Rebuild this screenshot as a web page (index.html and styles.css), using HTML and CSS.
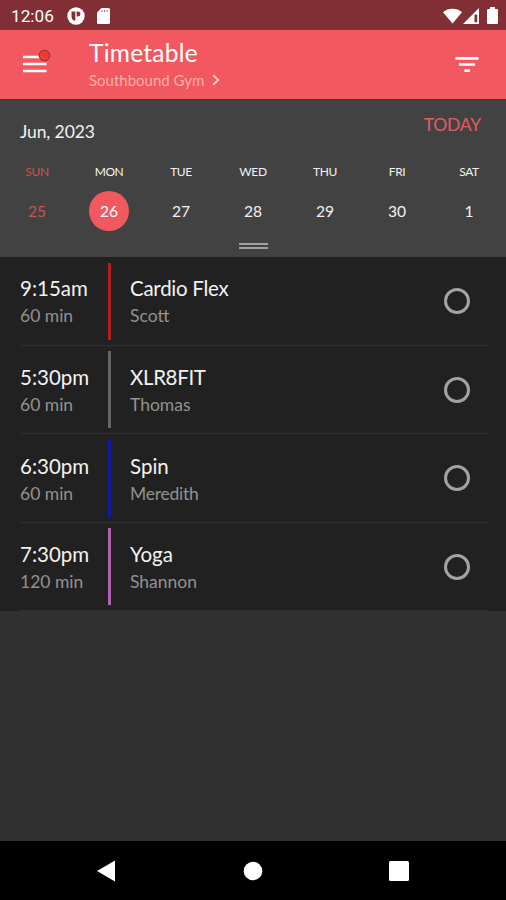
FILE: index.html
```html
<!DOCTYPE html>
<html lang="en">
<head>
<meta charset="utf-8">
<title>Timetable</title>
<link rel="stylesheet" href="styles.css">
</head>
<body>
<div class="status">
  <span class="clock">12:06</span>
  <svg class="app-dot" width="18" height="18" viewBox="0 0 18 18"><circle cx="9" cy="9" r="8.700" fill="#fff"/><path d="M4.500 4.500H8.300V13.500H6.500A5 5 0 0 1 4.500 9.500z" fill="#812f34"/><path d="M9.600 4.500h1.400a2.500 2.500 0 0 1 0 5H9.600z" fill="#812f34"/></svg>
  <svg class="sd" width="13" height="16" viewBox="0 0 13 16"><path d="M4.500 0H11.500a1.500 1.500 0 0 1 1.500 1.500V14.500a1.500 1.500 0 0 1-1.500 1.500H1.500A1.500 1.500 0 0 1 0 14.500V4.500z" fill="#fff"/><path d="M5 2v2M7.500 2v2M10 2v2" stroke="#a8686b" stroke-width="1"/></svg>
  <div class="system">
    <svg width="19" height="16" viewBox="0 0 20 16"><path d="M0 4C5.500-.8 14.500-.8 20 4L10 16z" fill="#fff"/></svg>
    <svg width="16" height="16" viewBox="0 0 16 16"><path d="M16 0v16H0z" fill="#fff"/><path d="M11.500 6.500h2.700v7.700h-2.700z" fill="#812f34"/></svg>
    <svg class="battery" width="11" height="17" viewBox="0 0 11 17"><path d="M3 0h5v2h2a1 1 0 0 1 1 1v13a1 1 0 0 1-1 1H1a1 1 0 0 1-1-1V3a1 1 0 0 1 1-1h2z" fill="#fff"/></svg>
  </div>
</div>
<header class="appbar">
  <svg class="menu" width="28" height="26" viewBox="0 0 28 26"><path d="M0 9h23.500M0 16h23.500M0 23h23.500" stroke="#fff" stroke-width="2.700"/><circle cx="21.500" cy="7.500" r="5.300" fill="#f63a2f" stroke="#7c3034" stroke-width="1"/></svg>
  <div class="heading">
    <h1>Timetable</h1>
    <div class="venue"><span>Southbound Gym</span><svg width="8" height="12" viewBox="0 0 8 12"><path d="M1.200 1.200 6.200 6l-5 4.800" fill="none" stroke="#ffc9c9" stroke-width="2"/></svg></div>
  </div>
  <svg class="filter" width="24" height="17" viewBox="0 0 24 17"><path d="M.5 2.300h23M4 8.500h16M9.500 14.700h5.500" stroke="#fff" stroke-width="2.700"/></svg>
</header>
<section class="calendar">
  <div class="cal-head"><span class="month">Jun, 2023</span><span class="today">TODAY</span></div>
  <div class="week">
    <div class="day sun"><span class="name">SUN</span><span class="date">25</span></div>
    <div class="day"><span class="name">MON</span><span class="date selected">26</span></div>
    <div class="day"><span class="name">TUE</span><span class="date">27</span></div>
    <div class="day"><span class="name">WED</span><span class="date">28</span></div>
    <div class="day"><span class="name">THU</span><span class="date">29</span></div>
    <div class="day"><span class="name">FRI</span><span class="date">30</span></div>
    <div class="day"><span class="name">SAT</span><span class="date">1</span></div>
  </div>
  <div class="handle"></div>
</section>
<main class="list">
  <div class="row"><div class="when"><b>9:15am</b><small>60 min</small></div><i class="bar red"></i><div class="what"><b class="cardio">Cardio Flex</b><small>Scott</small></div><i class="ring"></i></div>
  <div class="row"><div class="when"><b>5:30pm</b><small>60 min</small></div><i class="bar gray"></i><div class="what"><b class="xlr">XLR8FIT</b><small>Thomas</small></div><i class="ring"></i></div>
  <div class="row"><div class="when"><b>6:30pm</b><small>60 min</small></div><i class="bar blue"></i><div class="what"><b>Spin</b><small class="tight">Meredith</small></div><i class="ring"></i></div>
  <div class="row"><div class="when"><b>7:30pm</b><small>120 min</small></div><i class="bar pink"></i><div class="what"><b>Yoga</b><small>Shannon</small></div><i class="ring"></i></div>
</main>
<nav class="navbar">
  <svg width="20" height="22" viewBox="0 0 20 22"><path d="M1 11 19 .5v21z" fill="#fff"/></svg>
  <svg width="20" height="20" viewBox="0 0 20 20"><circle cx="10" cy="10" r="9.300" fill="#fff"/></svg>
  <svg width="20" height="20" viewBox="0 0 20 20"><rect width="20" height="20" rx="1.500" fill="#fff"/></svg>
</nav>
</body>
</html>
```
FILE: styles.css
```css
* { box-sizing: border-box; }
body {
  margin: 0;
  width: 506px;
  height: 900px;
  display: flex;
  flex-direction: column;
  background: #303030;
  color: #f2f2f2;
  font-family: Lato, "Open Sans", sans-serif;
  overflow: hidden;
}
svg { display: block; flex: none; overflow: visible; }
.status {
  height: 30px;
  display: flex;
  align-items: center;
  padding: 1px 8px 0 11px;
  background: #812f34;
}
.clock { width: 56px; font: 17.2px/20px Roboto, sans-serif; color: #fff; }
.sd { margin-left: 12px; }
.system { margin-left: auto; display: flex; align-items: center; gap: 1px; }
.battery { margin-left: 7px; }
.appbar {
  height: 70px;
  display: flex;
  background: #f2585f;
  border-bottom: 1px solid #2f4145;
}
.menu { margin: 18px 38px 0 23px; }
.heading { padding-top: 8px; }
h1 { margin: 0; font-size: 24.5px; font-weight: 400; line-height: 30px; color: #fff; letter-spacing: .25px; }
.venue {
  display: flex;
  align-items: center;
  gap: 8px;
  margin-top: 2px;
  font-size: 15px;
  line-height: 20px;
  color: #ffadad;
}
.filter { margin: 26px 27px 0 auto; }
.calendar { height: 157px; background: #424242; }
.cal-head {
  display: flex;
  justify-content: space-between;
  height: 63px;
  padding: 0 25px 0 20px;
  font-size: 17.5px;
  line-height: 20px;
}
.month { padding-top: 22px; letter-spacing: -.1px; }
.today { padding-top: 15px; color: #e45b62; letter-spacing: -.2px; }
.week { display: grid; grid-template-columns: repeat(7, 72px); padding-left: 1px; }
.day { display: flex; flex-direction: column; align-items: center; }
.name { font-size: 12px; line-height: 18px; letter-spacing: -.4px; }
.date {
  width: 40px;
  height: 40px;
  margin-top: 10px;
  border-radius: 50%;
  text-align: center;
  font-size: 15.6px;
  line-height: 41px;
}
.sun { color: #cf514c; }
.selected { background: #f2585f; color: #fff; }
.handle {
  width: 29px;
  height: 6px;
  margin: 12px auto 0;
  border: solid #a0a0a0;
  border-width: 2px 0;
}
.list { background: #212121; height: 354px; }
.row { display: flex; height: 88.6px; margin-left: 20px; margin-right: 18px; border-bottom: 1px solid #303030; }
.row b, .row small { display: block; font-weight: 400; white-space: nowrap; }
.row b { font-size: 20.5px; line-height: 26px; }
.row small { font-size: 17.5px; line-height: 24px; margin-top: 3px; color: #929292; }
.row .cardio { letter-spacing: -.27px; }
.row .xlr { letter-spacing: -.35px; }
.row .tight { letter-spacing: -.25px; }
.when, .what { padding-top: 18.4px; }
.when { width: 88px; }
.bar { width: 3px; height: 77px; margin: 5.500px 19px 0 0; }
.red { background: #b51e20; }
.gray { background: #666; }
.blue { background: #1717a5; }
.pink { background: #ad63ae; }
.ring { width: 26px; height: 26px; margin: 31px 18px 0 auto; border: 3px solid #a3a3a3; border-radius: 50%; }
.navbar {
  height: 59px;
  margin-top: auto;
  display: flex;
  justify-content: space-between;
  align-items: center;
  padding: 0 97px 0 96px;
  background: #000;
}
```
